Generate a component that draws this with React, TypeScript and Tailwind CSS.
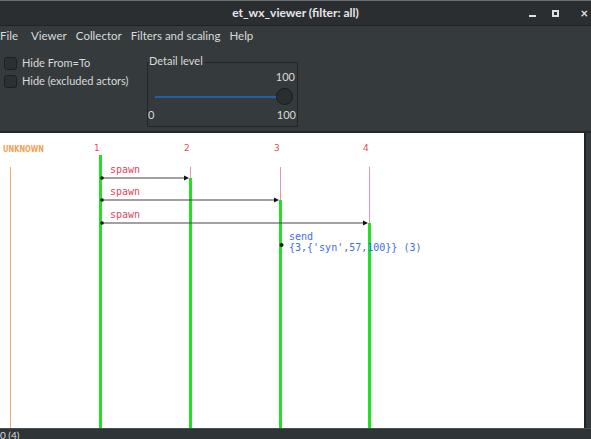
import React from "react";

const ui = { fontFamily: "Lato, 'Liberation Sans', sans-serif" };
const mono = "'DejaVu Sans Mono', 'Liberation Mono', monospace";
const sans = "'DejaVu Sans', 'Liberation Sans', sans-serif";

const Checkbox = ({ label }: { label: string }) => (
  <label className="flex h-[18px] items-center gap-[5px]">
    <span className="h-[13px] w-[13px] rounded-[3px] border border-[#1d2021] bg-[#2c3032]" />
    <span className="text-[11px] text-[#d8dadb]">{label}</span>
  </label>
);

const Arrow = ({ y, x2 }: { y: number; x2: number }) => (
  <g>
    <line x1={101} y1={y} x2={x2 - 3} y2={y} stroke="#444" strokeWidth={1.2} />
    <circle cx={102} cy={y} r={1.8} fill="#111" />
    <polygon points={`${x2},${y} ${x2 - 5},${y - 2.5} ${x2 - 5},${y + 2.5}`} fill="#111" />
  </g>
);

const Diagram = () => {
  const actors = [
    { x: 94, label: "1" },
    { x: 184, label: "2" },
    { x: 274, label: "3" },
    { x: 363, label: "4" },
  ];
  return (
    <svg width="584" height="295" viewBox="0 0 584 295" className="block">
      <rect width="584" height="295" fill="#fff" />
      <text
        x={3}
        y={18.5}
        fontSize={9}
        fontWeight="bold"
        fill="#f4a050"
        fontFamily={sans}
        textLength={41}
        lengthAdjust="spacingAndGlyphs"
      >
        UNKNOWN
      </text>
      {actors.map((a) => (
        <text key={a.label} x={a.x} y={18} fontSize={9} fill="#df4a5e" fontFamily={sans}>
          {a.label}
        </text>
      ))}
      <line x1={10.5} y1={34} x2={10.5} y2={295} stroke="#f4b070" strokeWidth={1} />
      <line x1={100.5} y1={22} x2={100.5} y2={295} stroke="#22e022" strokeWidth={3} />
      <line x1={190.5} y1={34} x2={190.5} y2={45} stroke="#e29aa6" strokeWidth={1} />
      <line x1={190.5} y1={45} x2={190.5} y2={295} stroke="#22e022" strokeWidth={3} />
      <line x1={280.5} y1={34} x2={280.5} y2={67} stroke="#e29aa6" strokeWidth={1} />
      <line x1={280.5} y1={67} x2={280.5} y2={295} stroke="#22e022" strokeWidth={3} />
      <line x1={369.5} y1={34} x2={369.5} y2={90} stroke="#e29aa6" strokeWidth={1} />
      <line x1={369.5} y1={90} x2={369.5} y2={295} stroke="#22e022" strokeWidth={3} />

      {[40, 62, 85].map((y) => (
        <text key={y} x={110} y={y} fontSize={10} fill="#d84a62" fontFamily={mono}>
          spawn
        </text>
      ))}
      <Arrow y={45} x2={189} />
      <Arrow y={67} x2={279} />
      <Arrow y={90} x2={368} />

      <circle cx={281.5} cy={112} r={2} fill="#111" />
      <text x={289} y={107} fontSize={10} fill="#3a6fe6" fontFamily={mono}>
        send
      </text>
      <text x={289} y={118} fontSize={10} fill="#3a6fe6" fontFamily={mono}>
        {"{3,{'syn',57,100}} (3)"}
      </text>
    </svg>
  );
};

export default function App() {
  return (
    <div className="flex h-[439px] w-[591px] flex-col overflow-hidden bg-[#353a3c]" style={ui}>
      {/* title bar */}
      <div className="relative flex h-[26px] items-center justify-center border-t border-[#6b7072] border-b border-b-[#1f2223] bg-[#2b2e30] pb-[1px]">
        <span className="text-[12px] font-bold text-[#e6e7e8]">et_wx_viewer (filter: all)</span>
        <div className="absolute right-0 top-0 flex h-full items-center">
          <span className="mr-[16px] mt-[6px] h-[2px] w-[7px] bg-[#e0e0e0]" />
          <span className="mr-[21px] h-[7px] w-[7px] border-[2px] border-[#e0e0e0]" />
          <span className="mr-[3px] text-[13px] font-bold leading-none text-[#e0e0e0]">×</span>
        </div>
      </div>

      {/* menu bar */}
      <div className="flex h-[21px] items-center pb-[1px] text-[11.5px] text-[#d8dadb]">
        <span className="ml-0">File</span>
        <span className="ml-[13px]">Viewer</span>
        <span className="ml-[9px]">Collector</span>
        <span className="ml-[9px]">Filters and scaling</span>
        <span className="ml-[9px]">Help</span>
      </div>

      {/* controls */}
      <div className="flex h-[84px]">
        <div className="ml-[4px] mt-[7px] flex w-[143px] flex-col">
          <Checkbox label="Hide From=To" />
          <Checkbox label="Hide (excluded actors)" />
        </div>
        <div className="relative mt-[15px] h-[65px] w-[151px] border border-[#232627]">
          <span className="absolute -top-[8px] left-[1px] bg-[#353a3c] pr-[1px] text-[11px] leading-none text-[#d8dadb]">
            Detail level
          </span>
          <div className="flex flex-col text-[11px] leading-none text-[#d8dadb]">
            <span className="mt-[8px] self-end pr-[2px]">100</span>
            <div className="relative ml-[7px] mt-[14px] h-[2px] w-[129px] bg-[#2160a8]">
              <span className="absolute -right-[9px] -top-[8px] h-[17px] w-[17px] rounded-full border border-[#1a1c1d] bg-[#2a2e30]" />
            </div>
            <div className="mt-[11px] flex justify-between pr-[1px]">
              <span>0</span>
              <span>100</span>
            </div>
          </div>
        </div>
      </div>

      {/* canvas */}
      <div className="flex border-t-[2px] border-[#25282a]">
        <Diagram />
        <div className="w-[2px] bg-[#1f2223]" />
      </div>

      {/* status bar */}
      <div className="h-[11px] overflow-hidden border-t border-[#4a4f51] bg-[#2f3436]">
        <span className="block pt-[1px] text-[10px] leading-none text-[#d8dadb]">0 (4)</span>
      </div>
    </div>
  );
}
